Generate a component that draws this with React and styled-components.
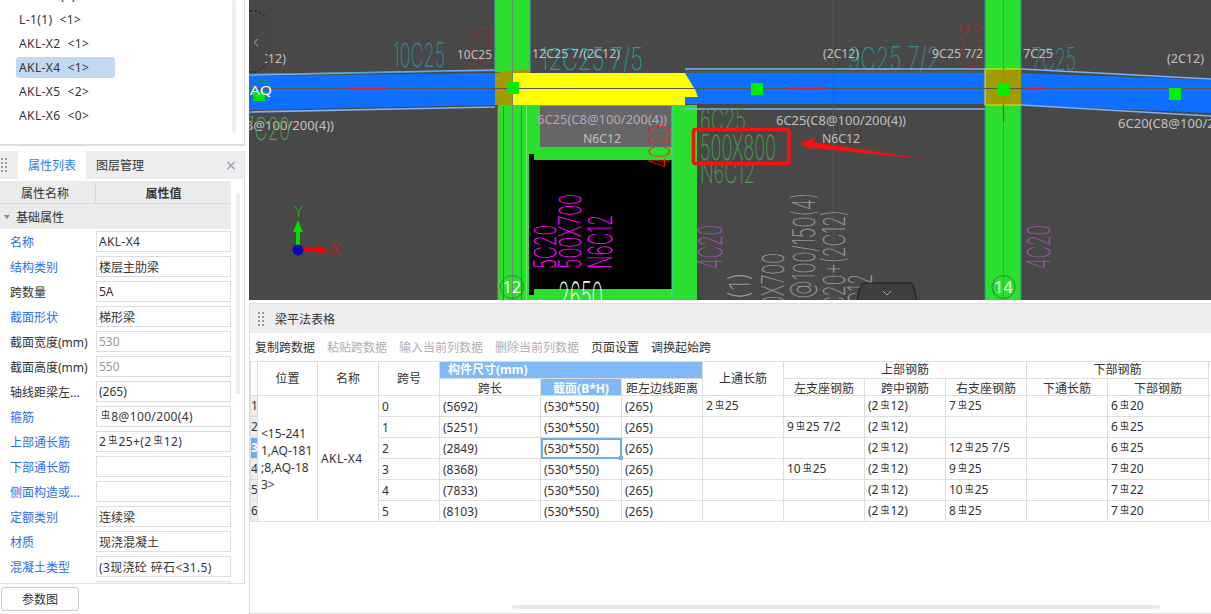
import React from "react";
import styled, { createGlobalStyle } from "styled-components";

const GlobalStyle = createGlobalStyle`
  html, body {
    margin: 0;
    padding: 0;
    background: #fff;
    overflow: hidden;
  }
  body {
    font-family: "Noto Sans", "Noto Sans CJK SC", sans-serif;
    font-size: 12px;
    color: #333;
  }
`;

const treeItems = ["AKL-X1(1)", "L-1(1)  <1>", "AKL-X2  <1>", "AKL-X4  <1>", "AKL-X5  <2>", "AKL-X6  <0>"];

const props = [
  { label: "名称", value: "AKL-X4", link: true, latin: true },
  { label: "结构类别", value: "楼层主肋梁", link: true },
  { label: "跨数量", value: "5A" },
  { label: "截面形状", value: "梯形梁", link: true },
  { label: "截面宽度(mm)", value: "530", dim: true },
  { label: "截面高度(mm)", value: "550", dim: true },
  { label: "轴线距梁左...", value: "(265)" },
  { label: "箍筋", value: " ~8@100/200(4)", link: true, latin: true },
  { label: "上部通长筋", value: "2~25+(2~12)", link: true, latin: true },
  { label: "下部通长筋", value: "", link: true },
  { label: "侧面构造或...", value: "", link: true },
  { label: "定额类别", value: "连续梁", link: true },
  { label: "材质", value: "现浇混凝土", link: true },
  { label: "混凝土类型", value: "(3现浇砼 碎石<31.5)", link: true, latin: true },
  { label: "", value: "" },
];

const tools = [
  ["复制跨数据"],
  ["粘贴跨数据", true],
  ["输入当前列数据", true],
  ["删除当前列数据", true],
  ["页面设置"],
  ["调换起始跨"],
];

const spans = [
  { no: 0, len: "(5692)", top: "2~25", left: "", mid: "(2~12)", right: "7~25", bot: "6~20" },
  { no: 1, len: "(5251)", top: "", left: "9~25 7/2", mid: "(2~12)", right: "", bot: "6~25" },
  { no: 2, len: "(2849)", top: "", left: "", mid: "(2~12)", right: "12~25 7/5", bot: "6~25", active: true },
  { no: 3, len: "(8368)", top: "", left: "10~25", mid: "(2~12)", right: "9~25", bot: "7~20" },
  { no: 4, len: "(7833)", top: "", left: "", mid: "(2~12)", right: "10~25", bot: "7~22" },
  { no: 5, len: "(8103)", top: "", left: "", mid: "(2~12)", right: "8~25", bot: "7~20" },
];

const colWidths = [7, 60, 61, 61, 101, 81, 81, 81, 81, 81, 81, 81, 101, 60];

// "~" in the data stands for the rebar grade mark
const Rebar = ({ text }) =>
  text.split("~").map((part, i) => (
    <React.Fragment key={i}>
      {i > 0 && <Mark>虫</Mark>}
      {part}
    </React.Fragment>
  ));

const Grip = () => (
  <GripBox>
    {Array.from({ length: 8 }).map((_, i) => (
      <i key={i} />
    ))}
  </GripBox>
);

// big thin cad note: w and h are the measured size of the text on the drawing
const Cad = ({ x, y, w, h, c, rot = 0, children }) => (
  <CadLabel
    transform={`translate(${x} ${y}) rotate(${rot})`}
    fill={c}
    fontSize={h / 0.72}
    textLength={w}
    lengthAdjust="spacingAndGlyphs"
  >
    {children}
  </CadLabel>
);

// small grey annotation
const Note = ({ x, y, w, c = "#c0c0c0", children }) => (
  <NoteLabel x={x} y={y} fill={c} textLength={w} lengthAdjust="spacingAndGlyphs">
    {children}
  </NoteLabel>
);

const Drawing = () => (
  <CanvasSvg viewBox="249 0 962 300">
    <rect x="249" y="0" width="962" height="300" fill="#484848" />

    {/* columns */}
    <rect x="495" y="0" width="35" height="72" fill="#2bdf2f" />
    <path d="M495 0V72M530 0V72" stroke="#4aa0b0" strokeWidth="1.2" fill="none" />
    <rect x="498" y="105" width="199" height="195" fill="#2bdf2f" />
    <rect x="985" y="0" width="36" height="300" fill="#2bdf2f" />
    <path d="M985 0V300M1021 0V300" stroke="#2b8f9a" strokeWidth="1" fill="none" />
    <rect x="529" y="160" width="143" height="129" fill="#000" />
    <rect x="529" y="154" width="5" height="7" fill="#000" />
    <rect x="529" y="288" width="5" height="7" fill="#000" />
    <rect x="540" y="106" width="132" height="41" fill="#666" />
    <path d="M672 106V300" stroke="#2be0c0" strokeWidth="1" />
    <path d="M526.5 106V300" stroke="#6fec6f" strokeWidth="1" />
    <path d="M498 106V300" stroke="#8a9a40" strokeWidth="1.2" />
    <path d="M503.5 106V300M521.5 106V300" stroke="#e02020" strokeWidth="0.8" />

    {/* upper notes, under the beam */}
    <Cad x="393" y="67" w="52" h="24" c="#2f8a92">10C25</Cad>
    <Cad x="540" y="70" w="103" h="22" c="#1f9aa2">12C25 7/5</Cad>
    <Cad x="848" y="70" w="92" h="23" c="#2f8a92">9C25 7/2</Cad>
    <Cad x="1032" y="70" w="44" h="22" c="#2f8a92">7C25</Cad>
    <Cad x="491" y="72" w="45" h="21" c="#8a3838" rot={-90}>7/C25</Cad>
    <Cad x="982" y="68" w="46" h="22" c="#8a3838" rot={-90}>6C25</Cad>

    {/* beam */}
    <polygon points="249,76 495,73 495,105 249,110" fill="#0f6fff" />
    <polygon points="685,73 985,73 985,103 685,103" fill="#0f6fff" />
    <polygon points="1021,73 1211,80 1211,113 1021,105" fill="#0f6fff" />
    <path d="M249 75L495 70M249 112L495 107M685 69H985M685 109H985M1021 69L1211 79M1021 105L1211 116" stroke="#7fb0f5" strokeWidth="1.6" fill="none" />
    <path d="M249 74L495 71M685 72H985M685 103.5H985" stroke="#25a0a0" strokeWidth="0.6" fill="none" />
    <polygon points="513,73 685,73 694,88 695,89 698,97 685,97 685,105 513,105" fill="#ffff00" />
    <polygon points="495,73 513,70 530,70 530,73 513,73 513,105 495,105" fill="#a39a00" />
    <rect x="985" y="69" width="36" height="36" fill="#a39a00" />
    <path d="M1021 69H985V105H1021" stroke="#e8e800" strokeWidth="1" fill="none" />

    {/* axis lines */}
    <path d="M249 88.5H1211" stroke="#555" strokeWidth="1" />
    <path d="M512.5 0V300M1003.5 0V300" stroke="#6f8a6f" strokeWidth="1" />
    <path d="M833.5 0V300" stroke="#7a4a4a" strokeWidth="0.8" />
    <path d="M348 88.5H385M787 88.5H826M1026 88.5H1045" stroke="#e02020" strokeWidth="1" />
    <path d="M1003.5 105V122" stroke="#c03030" strokeWidth="1.2" />

    {/* nodes */}
    <rect x="507" y="82" width="12" height="12" fill="#00f000" />
    <rect x="751" y="83" width="12" height="12" fill="#00f000" />
    <rect x="997" y="83" width="12" height="12" fill="#00f000" />
    <rect x="1169" y="88" width="12" height="12" fill="#00f000" />
    <rect x="253" y="92" width="12" height="9" fill="#00f000" />
    <circle cx="260" cy="90" r="10" fill="none" stroke="#1c8f3c" strokeWidth="1" />

    {/* small grey notes */}
    <Note x="457" y="59" w="35">10C25</Note>
    <Note x="532" y="58" w="88">12C25 7/(2C12)</Note>
    <Note x="249" y="63" w="37">(2C12)</Note>
    <Note x="823" y="58" w="36">(2C12)</Note>
    <Note x="932" y="58" w="51">9C25 7/2</Note>
    <Note x="1023" y="58" w="30">7C25</Note>
    <Note x="1167" y="63" w="37">(2C12)</Note>
    <Note x="203" y="130" w="131">6C25(C8@100/200(4))</Note>
    <Note x="776" y="125" w="130">6C25(C8@100/200(4))</Note>
    <Note x="822" y="143" w="38">N6C12</Note>
    <Note x="1118" y="128" w="131">6C20(C8@100/200(4))</Note>
    <Note x="537" y="124" w="130" c="#b9a4b9">6C25(C8@100/200(4))</Note>
    <Note x="583" y="143" w="38">N6C12</Note>
    <Note x="250" y="95" w="22" c="#fff">AQ</Note>

    {/* green notes */}
    <Cad x="244" y="140" w="46" h="23" c="#46a046">7C20</Cad>
    <Cad x="700" y="130" w="46" h="21" c="#46a046">6C25</Cad>
    <Cad x="700" y="160" w="76" h="25" c="#46a046">500X800</Cad>
    <Cad x="700" y="183" w="55" h="21" c="#46a046">N6C12</Cad>

    {/* vertical notes */}
    <Cad x="670" y="168" w="43" h="21" c="#ee1c1c" rot={-90}>4C20</Cad>
    <Cad x="556" y="269" w="44" h="22" c="#ff00ff" rot={-90}>5C20</Cad>
    <Cad x="581" y="269" w="75" h="22" c="#ff00ff" rot={-90}>500X700</Cad>
    <Cad x="612" y="269" w="54" h="24" c="#ff00ff" rot={-90}>N6C12</Cad>
    <Cad x="722" y="269" w="44" h="24" c="#a050a8" rot={-90}>4C20</Cad>
    <Cad x="1050" y="269" w="44" h="23" c="#a050a8" rot={-90}>4C20</Cad>
    <Cad x="750" y="310" w="38" h="20" c="#959595" rot={-90}>1(1)</Cad>
    <Cad x="784" y="328" w="75" h="22" c="#959595" rot={-90}>500X700</Cad>
    <Cad x="815" y="323" w="130" h="22" c="#959595" rot={-90}>C8@100/150(4)</Cad>
    <Cad x="845" y="320" w="110" h="22" c="#959595" rot={-90}>2C20+(2C12)</Cad>
    <Cad x="872" y="328" w="54" h="24" c="#959595" rot={-90}>N6C12</Cad>
    <Cad x="558" y="310" w="45" h="28" c="#fff">2650</Cad>

    {/* axis bubbles */}
    <circle cx="512" cy="287" r="11.5" fill="none" stroke="#1c8f3c" />
    <circle cx="1003.5" cy="287" r="11.5" fill="none" stroke="#1c8f3c" />
    <BubbleText x="512" y="293">12</BubbleText>
    <BubbleText x="1003.5" y="293">14</BubbleText>

    {/* axis gizmo */}
    <path d="M298 250V229" stroke="#00e000" strokeWidth="4" />
    <polygon points="298,220 303,232 293,232" fill="#00e000" />
    <path d="M300 250H320" stroke="#f00000" strokeWidth="4" />
    <polygon points="329,250 317,245 317,255" fill="#f00000" />
    <circle cx="298" cy="250" r="5.5" fill="#0a0ab0" />
    <Cad x="294" y="217" w="9" h="10" c="#00e000">Y</Cad>
    <Cad x="331" y="255" w="9" h="11" c="#ff0000">X</Cad>

    {/* red markup */}
    <rect x="693.5" y="129.5" width="95.5" height="34" rx="2" fill="none" stroke="#f5120f" strokeWidth="3.5" />
    <polygon points="800,143 816,137 813,142 925,159 812,148 812,151" fill="#f5120f" />

    {/* collapse tabs */}
    <path d="M249 11H256L265 16V66L256 72H249Z" fill="#464646" />
    <path d="M249 11H256L265 16M265 66L256 72H249" stroke="#111" strokeDasharray="3 2" strokeWidth="0.8" fill="none" />
    <path d="M258 39L254 42.5L258 46" stroke="#aaa" fill="none" />
    <path d="M857 300L861 285L864 283H911L913 285L917 300Z" fill="#3f3f3f" />
    <path d="M857 300L861 285L864 283H911L913 285L917 300" stroke="#111" strokeWidth="0.8" fill="none" />
    <path d="M883 291L887 295L891 291" stroke="#aaa" fill="none" />
  </CanvasSvg>
);

const App = () => (
  <Page>
    <GlobalStyle />
    <Sidebar>
      <TreePanel>
        <TreeList>
          {treeItems.map((t) => (
            <TreeItem key={t}>
              <TreeChip $active={t.startsWith("AKL-X4")}>{t}</TreeChip>
            </TreeItem>
          ))}
        </TreeList>
        <TreeScroll />
      </TreePanel>

      <PropPanel>
        <TabBar>
          <Grip />
          <Tab $active>属性列表</Tab>
          <Tab>图层管理</Tab>
          <CloseMark>×</CloseMark>
        </TabBar>
        <PropHead>
          <PropHeadName>属性名称</PropHeadName>
          <PropHeadValue>属性值</PropHeadValue>
        </PropHead>
        <PropSection>
          <Caret />
          基础属性
        </PropSection>
        {props.map((p, i) => (
          <PropRow key={i}>
            <PropLabel $link={p.link}>{p.label}</PropLabel>
            <PropValue $dim={p.dim} $latin={p.latin}>
              <Rebar text={p.value} />
            </PropValue>
          </PropRow>
        ))}
        <PropScroll />
      </PropPanel>

      <ButtonRow>
        <ParamButton>参数图</ParamButton>
      </ButtonRow>
    </Sidebar>

    <Main>
      <Drawing />
      <TableHeader>
        <Grip />
        <TableTitle>梁平法表格</TableTitle>
      </TableHeader>
      <Toolbar>
        {tools.map(([label, off]) => (
          <ToolButton key={label} $off={off}>
            {label}
          </ToolButton>
        ))}
      </Toolbar>
      <TableWrap>
        <Grid>
          <colgroup>
            {colWidths.map((w, i) => (
              <col key={i} style={{ width: w }} />
            ))}
          </colgroup>
          <thead>
            <tr>
              <RowNoHead rowSpan={2} />
              <Th rowSpan={2}>位置</Th>
              <Th rowSpan={2}>名称</Th>
              <Th rowSpan={2}>跨号</Th>
              <GroupTh colSpan={3}>构件尺寸(mm)</GroupTh>
              <Th rowSpan={2}>上通长筋</Th>
              <Th colSpan={3}>上部钢筋</Th>
              <Th colSpan={2}>下部钢筋</Th>
              <Th rowSpan={2} />
            </tr>
            <tr>
              <SubTh>跨长</SubTh>
              <ActiveTh>截面(B*H)</ActiveTh>
              <SubTh>距左边线距离</SubTh>
              <SubTh>左支座钢筋</SubTh>
              <SubTh>跨中钢筋</SubTh>
              <SubTh>右支座钢筋</SubTh>
              <SubTh>下通长筋</SubTh>
              <SubTh>下部钢筋</SubTh>
            </tr>
          </thead>
          <tbody>
            {spans.map((s, i) => (
              <tr key={s.no}>
                <RowNo $active={s.active}>{i + 1}</RowNo>
                {i === 0 && (
                  <PlaceCell rowSpan={6}>
                    &lt;15-241
                    <br />
                    1,AQ-181
                    <br />
                    ;8,AQ-18
                    <br />
                    3&gt;
                  </PlaceCell>
                )}
                {i === 0 && <NameCell rowSpan={6}>AKL-X4</NameCell>}
                <Td>{s.no}</Td>
                <Td>{s.len}</Td>
                <Td $active={s.active}>
                  (530*550)
                  {s.active && <FillHandle />}
                </Td>
                <Td>(265)</Td>
                <Td><Rebar text={s.top} /></Td>
                <Td><Rebar text={s.left} /></Td>
                <Td><Rebar text={s.mid} /></Td>
                <Td><Rebar text={s.right} /></Td>
                <Td />
                <Td><Rebar text={s.bot} /></Td>
                <Td />
              </tr>
            ))}
          </tbody>
        </Grid>
        <HScroll />
      </TableWrap>
    </Main>
  </Page>
);

const Page = styled.div`
  display: flex;
  width: 1211px;
  height: 614px;
  overflow: hidden;
  background: #fff;
`;

const Sidebar = styled.aside`
  display: flex;
  flex-direction: column;
  flex: none;
  width: 249px;
  height: 614px;
`;

const TreePanel = styled.div`
  position: relative;
  flex: none;
  width: 245px;
  height: 146px;
  box-sizing: border-box;
  overflow: hidden;
  border-right: 1px solid #ddd;
  border-bottom: 2px solid #ddd;
`;

const TreeList = styled.ul`
  list-style: none;
  margin: -17px 0 0;
  padding: 0 0 0 16px;
`;

const TreeItem = styled.li`
  display: flex;
  align-items: center;
  height: 24px;
`;

const TreeChip = styled.span`
  display: flex;
  align-items: center;
  box-sizing: border-box;
  width: 99px;
  height: 21px;
  padding-left: 3px;
  border-radius: 3px;
  letter-spacing: 0.4px;
  white-space: pre;
  background: ${(p) => (p.$active ? "#c2d9f1" : "transparent")};
`;

const TreeScroll = styled.div`
  position: absolute;
  left: 232px;
  top: 0;
  width: 4px;
  height: 133px;
  border-radius: 2px;
  background: #eee;
`;

const PropPanel = styled.div`
  position: relative;
  flex: none;
  width: 245px;
  height: 433px;
  margin-top: 5px;
  box-sizing: border-box;
  overflow: hidden;
  border-right: 1px solid #ddd;
  border-bottom: 1px solid #ddd;
`;

const TabBar = styled.div`
  display: flex;
  align-items: stretch;
  height: 28px;
  padding-left: 1px;
  background: #eeeef0;
`;

const GripBox = styled.div`
  display: grid;
  grid-template-columns: 2px 2px;
  grid-auto-rows: 2px;
  column-gap: 2px;
  row-gap: 2px;
  align-content: center;
  flex: none;
  width: 6px;
  i {
    background: #999;
  }
`;

const Tab = styled.div`
  display: flex;
  align-items: center;
  justify-content: center;
  width: 68px;
  margin-left: ${(p) => (p.$active ? "11px" : "0")};
  color: ${(p) => (p.$active ? "#2b7cf0" : "#333")};
  background: ${(p) => (p.$active ? "#fff" : "transparent")};
`;

const CloseMark = styled.span`
  align-self: center;
  margin-left: auto;
  margin-right: 8px;
  font-size: 18px;
  line-height: 18px;
  color: #a0a0a0;
`;

const PropHead = styled.div`
  display: flex;
  width: 231px;
  height: 23px;
  margin-top: 2px;
  padding-top: 1px;
  box-sizing: border-box;
  border-bottom: 1px solid #ddd;
  background: #ebebeb;
`;

const PropHeadName = styled.div`
  display: flex;
  align-items: center;
  justify-content: center;
  box-sizing: border-box;
  width: 96px;
  padding-right: 5px;
  border-right: 1px solid #d8d8d8;
`;

const PropHeadValue = styled.div`
  display: flex;
  align-items: center;
  justify-content: center;
  flex: 1;
  font-weight: 700;
`;

const PropSection = styled.div`
  display: flex;
  align-items: center;
  gap: 6px;
  width: 231px;
  height: 25px;
  padding: 1px 0 0 4px;
  box-sizing: border-box;
  background: #ebebeb;
`;

const Caret = styled.span`
  width: 0;
  height: 0;
  border-left: 3px solid transparent;
  border-right: 3px solid transparent;
  border-top: 4px solid #888;
`;

const PropRow = styled.div`
  display: flex;
  align-items: center;
  width: 231px;
  height: 25px;
`;

const PropLabel = styled.div`
  flex: none;
  width: 96px;
  padding-left: 10px;
  box-sizing: border-box;
  white-space: nowrap;
  color: ${(p) => (p.$link ? "#2b6fec" : "#333")};
`;

const PropValue = styled.div`
  display: flex;
  align-items: center;
  flex: none;
  width: 135px;
  height: 21px;
  box-sizing: border-box;
  padding-left: 2px;
  border: 1px solid #ddd;
  white-space: pre;
  letter-spacing: ${(p) => (p.$latin ? "0.35px" : "0")};
  color: ${(p) => (p.$dim ? "#999" : "#333")};
`;

const PropScroll = styled.div`
  position: absolute;
  left: 236px;
  top: 42px;
  width: 4px;
  height: 202px;
  border-radius: 2px;
  background: #eee;
`;

const ButtonRow = styled.div`
  flex: none;
  padding: 3px 0 0 1px;
`;

const ParamButton = styled.button`
  display: block;
  width: 78px;
  height: 24px;
  padding: 0;
  border: 1px solid #ccc;
  border-radius: 3px;
  background: #fff;
  font: inherit;
  color: #333;
`;

const Main = styled.main`
  display: flex;
  flex-direction: column;
  flex: none;
  width: 962px;
  height: 614px;
  overflow: hidden;
`;

const CanvasSvg = styled.svg`
  display: block;
  flex: none;
  width: 962px;
  height: 300px;
`;

const CadLabel = styled.text`
  font-family: "Inter", "Liberation Sans", sans-serif;
  font-weight: 200;
`;

const NoteLabel = styled.text`
  font-family: "Noto Sans", sans-serif;
  font-size: 12.5px;
`;

const BubbleText = styled.text`
  font-family: "Noto Sans", sans-serif;
  font-size: 16px;
  text-anchor: middle;
  fill: #fff;
`;

const TableHeader = styled.div`
  display: flex;
  align-items: center;
  flex: none;
  height: 30px;
  margin-top: 3px;
  padding-left: 8px;
  box-sizing: border-box;
  border-left: 1px solid #ddd;
  border-top: 1px solid #ddd;
  background: #eeeef0;
`;

const TableTitle = styled.span`
  margin-left: 11px;
`;

const Toolbar = styled.div`
  display: flex;
  align-items: center;
  flex: none;
  gap: 12px;
  height: 28px;
  padding-left: 5px;
  border-left: 1px solid #ddd;
  box-sizing: border-box;
`;

const ToolButton = styled.span`
  color: ${(p) => (p.$off ? "#b0b0b0" : "#333")};
`;

const TableWrap = styled.div`
  position: relative;
  flex: 1;
  border-left: 1px solid #ddd;
  border-bottom: 1px solid #ddd;
  overflow: hidden;
`;

const Grid = styled.table`
  table-layout: fixed;
  width: 1018px;
  border-collapse: collapse;
  line-height: 16px;
  color: #333;
  th,
  td {
    border: 1px solid #ddd;
    overflow: hidden;
    white-space: nowrap;
  }
`;

const Th = styled.th`
  height: 16px;
  padding: 0;
  font-weight: 400;
  text-align: center;
`;

const SubTh = styled(Th)`
  height: 13px;
  padding-top: 3px;
  line-height: 13px;
`;

const RowNoHead = styled.th`
  padding: 0;
  background: #fff;
`;

const GroupTh = styled.th`
  height: 16px;
  padding: 0 0 0 8px;
  text-align: left;
  font-weight: 700;
  color: #fff;
  background: #7fb9f8;
`;

const ActiveTh = styled.th`
  height: 13px;
  padding: 3px 0 0;
  line-height: 13px;
  font-weight: 700;
  color: #fff;
  background: #7fb9f8;
`;

const RowNo = styled.td`
  height: 20px;
  padding: 0;
  text-align: center;
  font-weight: ${(p) => (p.$active ? 700 : 400)};
  color: ${(p) => (p.$active ? "#fff" : "#333")};
  background: ${(p) => (p.$active ? "#6aaef0" : "#eee")};
`;

const PlaceCell = styled.td`
  padding: 0 0 0 3px;
  line-height: 17px;
  text-align: left;
`;

const Td = styled.td`
  position: relative;
  height: 19px;
  padding: 1px 0 0 3px;
  text-align: left;
  ${(p) => p.$active && "outline: 2px solid #6aaef0; outline-offset: -2px; overflow: visible !important;"}
`;

const NameCell = styled(Td)`
  letter-spacing: 0.4px;
`;

const FillHandle = styled.span`
  position: absolute;
  right: -2px;
  bottom: -2px;
  width: 4px;
  height: 4px;
  background: #6aaef0;
`;

const Mark = styled.span`
  position: relative;
  top: -2px;
  margin: 0 1px 0 2px;
  font-size: 9px;
  font-family: "Noto Sans CJK SC", sans-serif;
`;

const HScroll = styled.div`
  position: absolute;
  left: 262px;
  top: 244px;
  width: 648px;
  height: 4px;
  border-radius: 2px;
  background: #e8e8e8;
`;

export default App;
